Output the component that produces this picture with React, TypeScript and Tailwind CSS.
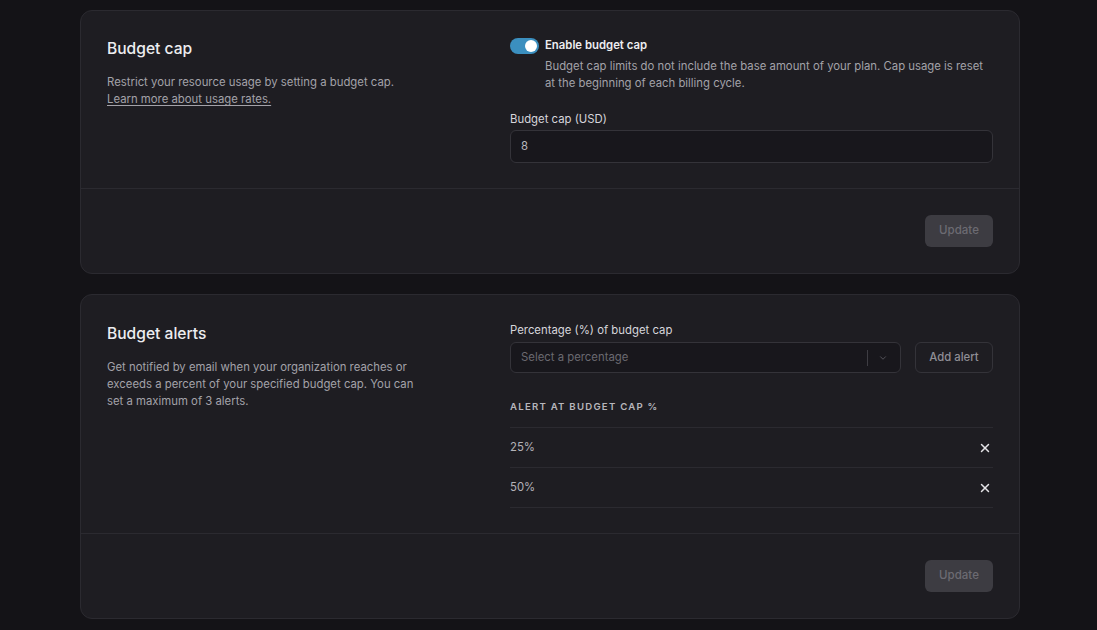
import React, { useState } from 'react';
import { X, ChevronDown } from 'lucide-react';

const font = { fontFamily: 'Inter, "Noto Sans", sans-serif' };

const UpdateButton: React.FC = () => (
  <button
    disabled
    className="h-8 w-[68px] rounded-md bg-[#3d3c42] text-[11.5px] font-medium text-[#6c6b72]"
  >
    Update
  </button>
);

const Card: React.FC<{ left: React.ReactNode; right: React.ReactNode }> = ({ left, right }) => (
  <div className="rounded-xl border border-[#2b2a30] bg-[#1e1d22]">
    <div className="flex px-[26px] pt-[26px] pb-[25px]">
      <div className="w-[403px] shrink-0">{left}</div>
      <div className="flex-1">{right}</div>
    </div>
    <div className="flex justify-end border-t border-[#2b2a30] px-[26px] pt-[26px] pb-[26px]">
      <UpdateButton />
    </div>
  </div>
);

export default function App() {
  const [enabled, setEnabled] = useState(true);
  const [alerts, setAlerts] = useState(['25%', '50%']);

  return (
    <div style={font} className="min-h-screen bg-[#141317] pl-20 pr-[77px] pt-[10px] pb-3 text-[11.35px] text-[#a3a2a9]">
      <div className="flex flex-col gap-5">
        <Card
          left={
            <>
              <h2 className="mt-[1px] text-[15.6px] font-medium leading-[22px] text-[#ededf0]">Budget cap</h2>
              <p className="mt-[14px] leading-[17px]">
                Restrict your resource usage by setting a budget cap.
                <br />
                <a className="underline underline-offset-2">Learn more about usage rates.</a>
              </p>
            </>
          }
          right={
            <>
              <div className="flex gap-[6px]">
                <button
                  onClick={() => setEnabled(!enabled)}
                  className={`mt-[1px] flex h-[16px] w-[29px] shrink-0 items-center rounded-full px-[2px] ${
                    enabled ? 'justify-end bg-[#3b8fbf]' : 'justify-start bg-[#3d3c42]'
                  }`}
                >
                  <span className="h-[12px] w-[12px] rounded-full bg-white" />
                </button>
                <div>
                  <div className="font-semibold leading-[17px] text-[#ededf0]">Enable budget cap</div>
                  <p className="mt-[4px] leading-[17px]">
                    Budget cap limits do not include the base amount of your plan. Cap usage is reset
                    at the beginning of each billing cycle.
                  </p>
                </div>
              </div>
              <label className="mt-[19px] block leading-[17px] text-[#d6d5db]">Budget cap (USD)</label>
              <div className="mt-[2px] flex h-[33px] items-center rounded-md border border-[#343339] bg-[#18171c] px-[10px] text-[#b9b8be]">
                8
              </div>
            </>
          }
        />
        <Card
          left={
            <>
              <h2 className="mt-[2px] text-[15.6px] font-medium leading-[22px] text-[#ededf0]">Budget alerts</h2>
              <p className="mt-[14px] max-w-[315px] leading-[17px]">
                Get notified by email when your organization reaches or exceeds a percent of your
                specified budget cap. You can set a maximum of 3 alerts.
              </p>
            </>
          }
          right={
            <>
              <label className="mt-[1px] block leading-[17px] text-[#d6d5db]">Percentage (%) of budget cap</label>
              <div className="mt-[3px] flex gap-[14px]">
                <div className="flex h-[31px] flex-1 items-center rounded-md border border-[#343339] bg-[#18171c] pl-[10px] pr-[12px]">
                  <span className="flex-1 text-[#6a6970]">Select a percentage</span>
                  <span className="h-[16px] w-px bg-[#3e3d43]" />
                  <ChevronDown className="ml-[10px] h-[10px] w-[10px] text-[#5f5e65]" strokeWidth={2} />
                </div>
                <button className="h-[31px] w-[78px] rounded-md border border-[#343339] font-medium text-[#8f8e95]">
                  Add alert
                </button>
              </div>
              <div className="mt-[27px] text-[9.6px] font-semibold uppercase leading-[14px] tracking-[0.13em] text-[#b7b6bc]">
                Alert at budget cap %
              </div>
              <div className="mt-[13px] border-t border-[#2b2a30]">
                {alerts.map((a) => (
                  <div key={a} className="flex h-[40px] items-center justify-between border-b border-[#2b2a30] pr-[1px]">
                    <span className="text-[#b3b2b8]">{a}</span>
                    <button onClick={() => setAlerts(alerts.filter((x) => x !== a))}>
                      <X className="h-[14px] w-[14px] text-[#e5e4e8]" strokeWidth={2.5} />
                    </button>
                  </div>
                ))}
              </div>
            </>
          }
        />
      </div>
    </div>
  );
}
